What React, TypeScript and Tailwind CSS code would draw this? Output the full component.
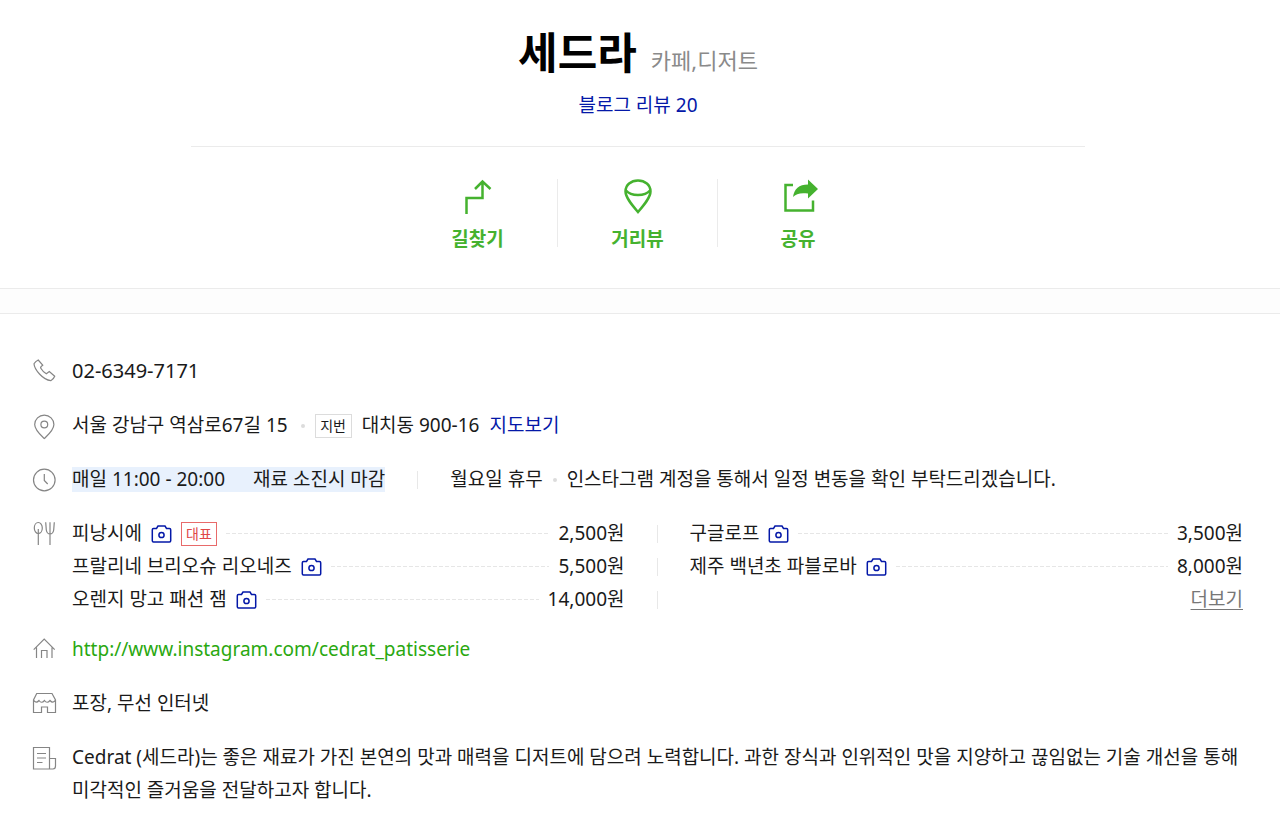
import React from 'react'

interface MenuItem {
  name: string
  price: string
  best?: boolean
}

interface InfoRowProps {
  label: string
  icon: React.ReactNode
  children: React.ReactNode
}

const leftMenu: MenuItem[] = [
  { name: '피낭시에', price: '2,500원', best: true },
  { name: '프랄리네 브리오슈 리오네즈', price: '5,500원' },
  { name: '오렌지 망고 패션 잼', price: '14,000원' },
]

const rightMenu: MenuItem[] = [
  { name: '구글로프', price: '3,500원' },
  { name: '제주 백년초 파블로바', price: '8,000원' },
]

const actions = [
  {
    label: '길찾기',
    icon: <path d="M8.5 37V21H24.5V4.5M17 12L24.5 4.5L32.5 12" />,
  },
  {
    label: '거리뷰',
    icon: (
      <path d="M20 35C14 28 7.5 20.5 7.5 14.5C7.5 8 13 3.5 20 3.5S32.5 8 32.5 14.5C32.5 20.5 26 28 20 35ZM8 13.5C13 19.5 27 19.5 32 13.5" />
    ),
  },
  {
    label: '공유',
    icon: (
      <>
        <path d="M15 8H7.5V33.5H35V23.5" />
        <path
          d="M15 20C16 12 21 7.5 30 7.5V2.5L40 12L30 21.5V16.5C23 15.5 18 16.5 15 20Z"
          fill="currentColor"
          stroke="none"
        />
      </>
    ),
  },
]

const icons = {
  phone: (
    <path d="M6.2 6L10.7 11.2Q8 13 8.8 14.3Q11 18 14.3 19.8L17.3 17.6L22.7 22.3Q21.5 25.5 18.8 26.7Q13 26 7.5 20Q2.3 14.5 2 9.8Q3.5 7.2 6.2 6Z" />
  ),
  pin: (
    <>
      <path d="M12.3 29.5C8 25.5 2.7 21 2.7 15.5A9.6 9.4 0 0 1 21.9 15.5C21.9 21 16.6 25.5 12.3 29.5Z" />
      <circle cx="12.3" cy="15.5" r="3.4" />
    </>
  ),
  clock: (
    <>
      <circle cx="12.3" cy="17" r="10.8" />
      <path d="M12.3 11V17.5L15.7 21" />
    </>
  ),
  menu: (
    <>
      <ellipse cx="6.3" cy="11" rx="4" ry="5.5" />
      <path d="M6.3 12V28M13.7 5.3L14.3 13Q15 17 18 17Q21 17 21.7 13L22.3 5.3M18 5.3V28" />
    </>
  ),
  home: <path d="M1.7 16.7L12.2 6.2L22.7 16.7M4.5 14.5V25M20 14.5V25M9.5 25V17.5H15V25" />,
  store: (
    <path d="M4.7 6.5H20L23.5 13V25.5H15.5V20H9.5V25.5H1.5V13ZM1.5 13Q4 17 7 13.5Q9.5 17 12.5 13.5Q15 17 18 13.5Q21 17 23.5 13" />
  ),
  news: (
    <path d="M17.5 28H1.5V6.5H17.5V28H21Q23.5 28 23.5 25V17.5H17.5M5 12.5H14M5 17H14M5 21.5H10.5" />
  ),
}

function InfoRow({ label, icon, children }: InfoRowProps) {
  return (
    <div className="flex gap-[14px]">
      <dt>
        <svg
          viewBox="0 0 26 33"
          className="h-[33px] w-[26px] text-[#858585]"
          fill="none"
          stroke="currentColor"
          strokeWidth="1.2"
          role="img"
          aria-label={label}
        >
          {icon}
        </svg>
      </dt>
      <dd className="min-w-0 flex-1">{children}</dd>
    </div>
  )
}

function Dot() {
  return <span className="size-1 shrink-0 rounded-full bg-[#dcdcdc]" />
}

function Bar() {
  return <span className="h-[18px] w-px shrink-0 bg-[#e8e8e8]" />
}

function MenuLine({ name, price, best }: MenuItem) {
  return (
    <div className="flex min-w-0 flex-1 items-center gap-[9px]">
      <span>{name}</span>
      <button type="button" aria-label={`${name} 사진 보기`} className="cursor-pointer text-[#0418a8]">
        <svg
          viewBox="0 0 20 18"
          className="h-[18px] w-[21px]"
          fill="none"
          stroke="currentColor"
          strokeWidth="1.5"
          aria-hidden="true"
        >
          <path d="M2 3.5H5L6.5 1H13.5L15 3.5H18Q19.2 3.5 19.2 4.7V15.8Q19.2 17 18 17H2Q.8 17 .8 15.8V4.7Q.8 3.5 2 3.5Z" />
          <circle cx="10" cy="10" r="2.6" />
        </svg>
      </button>
      {best && (
        <em className="h-6 w-9 border border-[#e86a6a] text-center text-[14px] leading-[22px] text-[#e04848] not-italic">
          대표
        </em>
      )}
      <span className="h-px flex-1 bg-[repeating-linear-gradient(90deg,#e6e6e6_0_4px,transparent_4px_6px)]" />
      <span>{price}</span>
    </div>
  )
}

export default function App() {
  return (
    <div className="min-h-screen bg-white font-['Noto_Sans','Noto_Sans_CJK_KR',sans-serif] text-[19px] leading-[33px] text-[#1a1a1a]">
      <header className="border-b border-[#ebebeb] pt-6 pr-1 pb-[41px]">
        <div className="mx-auto w-[70%] border-b border-[#ebebeb] pb-6 text-center">
          <div className="flex items-baseline justify-center gap-[14px] leading-[58px]">
            <h1 className="text-[43px] font-bold text-black">세드라</h1>
            <span className="text-[22px] text-[#8a8a8a]">카페,디저트</span>
          </div>
          <a href="#review" className="text-[#0418a8]">
            블로그 리뷰 20
          </a>
        </div>

        <nav className="mt-8 flex justify-center divide-x divide-[#ebebeb]">
          {actions.map(({ label, icon }) => (
            <button
              key={label}
              type="button"
              className="flex h-[68px] w-[160px] cursor-pointer flex-col items-center gap-2 font-bold text-[#45b22f]"
            >
              <svg
                viewBox="0 2 40 38"
                className="h-[38px] w-10 shrink-0"
                fill="none"
                stroke="currentColor"
                strokeWidth="2.5"
                aria-hidden="true"
              >
                {icon}
              </svg>
              <span className="leading-7">{label}</span>
            </button>
          ))}
        </nav>
      </header>

      <div className="h-6 bg-[#fdfdfd]" />

      <main className="border-t border-[#ebebeb] pt-10 pr-[37px] pb-2 pl-8">
        <dl className="flex flex-col gap-[21px]">
          <InfoRow label="전화" icon={icons.phone}>
            <span className="text-[20px]">02-6349-7171</span>
          </InfoRow>

          <InfoRow label="주소" icon={icons.pin}>
            <div className="flex items-center">
              <span className="mr-[13px]">서울 강남구 역삼로67길 15</span>
              <Dot />
              <span className="mr-[10px] ml-[10px] h-6 w-[37px] border border-[#dcdcdc] text-center text-[14px] leading-[22px]">
                지번
              </span>
              <span className="mr-[10px]">대치동 900-16</span>
              <a href="#map" className="text-[#0418a8]">
                지도보기
              </a>
            </div>
          </InfoRow>

          <InfoRow label="영업시간" icon={icons.clock}>
            <div className="flex items-center">
              <span className="flex gap-7 bg-[#e8f1fd] leading-[25px]">
                <span>매일 11:00 - 20:00</span>
                <span>재료 소진시 마감</span>
              </span>
              <span className="mx-8 flex">
                <Bar />
              </span>
              <span className="mr-[10px]">월요일 휴무</span>
              <Dot />
              <span className="ml-[10px]">인스타그램 계정을 통해서 일정 변동을 확인 부탁드리겠습니다.</span>
            </div>
          </InfoRow>

          <InfoRow label="메뉴" icon={icons.menu}>
            <div className="-mb-1 grid grid-cols-2">
              <ul>
                {leftMenu.map((item) => (
                  <li key={item.name} className="flex items-center gap-8">
                    <MenuLine {...item} />
                    <Bar />
                  </li>
                ))}
              </ul>
              <ul className="pl-8">
                {rightMenu.map((item) => (
                  <li key={item.name} className="flex">
                    <MenuLine {...item} />
                  </li>
                ))}
                <li className="text-right">
                  <a href="#menu" className="text-[#777] underline underline-offset-3">
                    더보기
                  </a>
                </li>
              </ul>
            </div>
          </InfoRow>

          <InfoRow label="홈페이지" icon={icons.home}>
            <a href="http://www.instagram.com/cedrat_patisserie" className="text-[#2aa80f]">
              http://www.instagram.com/cedrat_patisserie
            </a>
          </InfoRow>

          <InfoRow label="편의시설" icon={icons.store}>
            포장, 무선 인터넷
          </InfoRow>

          <InfoRow label="소개" icon={icons.news}>
            Cedrat (세드라)는 좋은 재료가 가진 본연의 맛과 매력을 디저트에 담으려 노력합니다. 과한 장식과 인위적인
            맛을 지양하고 끊임없는 기술 개선을 통해 미각적인 즐거움을 전달하고자 합니다.
          </InfoRow>
        </dl>
      </main>
    </div>
  )
}
